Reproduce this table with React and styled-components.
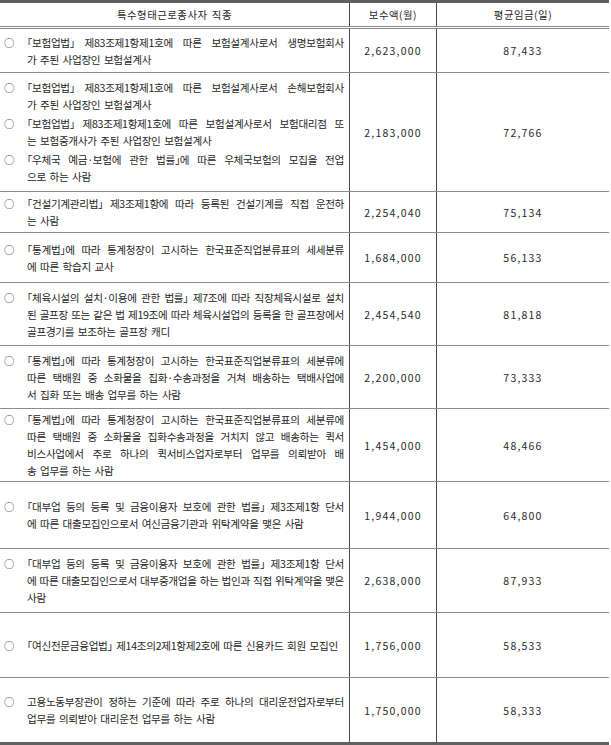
import React from 'react';
import styled, { createGlobalStyle } from 'styled-components';

const GlobalStyle = createGlobalStyle`
  html, body {
    margin: 0;
    padding: 0;
    background: #ffffff;
  }
  body {
    font-family: 'Noto Sans CJK KR', 'Noto Sans', sans-serif;
    color: #2a2a2a;
  }
`;

const Table = styled.div`
  width: 609px;
  border-top: 3px solid #5f5f5f;
  border-bottom: 3px solid #5f5f5f;
`;

const HeaderRow = styled.div`
  display: grid;
  grid-template-columns: 349px 87px 1fr;
  height: 26px;
  box-sizing: border-box;
  border-bottom: 3px double #8a8a8a;
`;

const HeaderCell = styled.div`
  display: flex;
  align-items: center;
  justify-content: center;
  font-size: 10.4px;
  letter-spacing: 0.5px;
  word-spacing: 1.5px;
  color: #2a2a2a;
  border-left: ${({ $first }) => ($first ? 'none' : '1px solid #4a4a4a')};
`;

const Row = styled.div`
  display: grid;
  grid-template-columns: 349px 87px 1fr;
  height: ${({ $h }) => $h}px;
  box-sizing: border-box;
  border-bottom: 1px solid #8c8c8c;

  &:last-child {
    border-bottom: none;
  }
`;

const DescCell = styled.div`
  display: flex;
  flex-direction: column;
  justify-content: center;
  gap: 2px;
  padding: 0 5px 0 4px;
  min-width: 0;
`;

const NumCell = styled.div`
  display: flex;
  align-items: center;
  justify-content: center;
  border-left: 1px solid #4a4a4a;
  font-size: 10.5px;
  letter-spacing: 1.2px;
  color: #2a2a2a;
`;

const Item = styled.div`
  display: flex;
  align-items: flex-start;
`;

const Bullet = styled.span`
  flex: none;
  width: 23px;
  font-size: 10.4px;
  line-height: 17px;
  color: #444;
`;

const Lines = styled.div`
  flex: 1;
  min-width: 0;
  font-size: 10.6px;
  line-height: 17px;
  letter-spacing: -0.3px;
  color: #262626;
  font-feature-settings: 'halt';
`;

const Line = styled.span`
  display: block;
  white-space: ${({ $justify }) => ($justify ? 'normal' : 'nowrap')};
  word-spacing: ${({ $justify }) => ($justify ? '0' : '1.5px')};
  text-align: ${({ $justify }) => ($justify ? 'justify' : 'left')};
  text-align-last: ${({ $justify }) => ($justify ? 'justify' : 'auto')};
`;

const Word = styled.span`
  display: inline-block;
  white-space: nowrap;
`;

const rows = [
  {
    h: 44,
    pay: '2,623,000',
    avg: '87,433',
    items: [
      ['「보험업법」 제83조제1항제1호에 따른 보험설계사로서 생명보험회사', '가 주된 사업장인 보험설계사'],
    ],
  },
  {
    h: 119,
    pay: '2,183,000',
    avg: '72,766',
    items: [
      ['「보험업법」 제83조제1항제1호에 따른 보험설계사로서 손해보험회사', '가 주된 사업장인 보험설계사'],
      ['「보험업법」 제83조제1항제1호에 따른 보험설계사로서 보험대리점 또', '는 보험중개사가 주된 사업장인 보험설계사'],
      ['「우체국 예금·보험에 관한 법률」에 따른 우체국보험의 모집을 전업', '으로 하는 사람'],
    ],
  },
  {
    h: 41,
    pay: '2,254,040',
    avg: '75,134',
    items: [['「건설기계관리법」 제3조제1항에 따라 등록된 건설기계를 직접 운전하', '는 사람']],
  },
  {
    h: 50,
    pay: '1,684,000',
    avg: '56,133',
    items: [['「통계법」에 따라 통계청장이 고시하는 한국표준직업분류표의 세세분류', '에 따른 학습지 교사']],
  },
  {
    h: 63,
    pay: '2,454,540',
    avg: '81,818',
    items: [
      [
        '「체육시설의 설치·이용에 관한 법률」 제7조에 따라 직장체육시설로 설치',
        '된 골프장 또는 같은 법 제19조에 따라 체육시설업의 등록을 한 골프장에서',
        '골프경기를 보조하는 골프장 캐디',
      ],
    ],
  },
  {
    h: 63,
    pay: '2,200,000',
    avg: '73,333',
    items: [
      [
        '「통계법」에 따라 통계청장이 고시하는 한국표준직업분류표의 세분류에',
        '따른 택배원 중 소화물을 집화·수송과정을 거쳐 배송하는 택배사업에',
        '서 집화 또는 배송 업무를 하는 사람',
      ],
    ],
  },
  {
    h: 73,
    pay: '1,454,000',
    avg: '48,466',
    items: [
      [
        '「통계법」에 따라 통계청장이 고시하는 한국표준직업분류표의 세분류에',
        '따른 택배원 중 소화물을 집화수송과정을 거치지 않고 배송하는 퀵서',
        '비스사업에서 주로 하나의 퀵서비스업자로부터 업무를 의뢰받아 배',
        '송 업무를 하는 사람',
      ],
    ],
  },
  {
    h: 67,
    pay: '1,944,000',
    avg: '64,800',
    items: [
      [
        '「대부업 등의 등록 및 금융이용자 보호에 관한 법률」 제3조제1항 단서',
        '에 따른 대출모집인으로서 여신금융기관과 위탁계약을 맺은 사람',
      ],
    ],
  },
  {
    h: 64,
    pay: '2,638,000',
    avg: '87,933',
    items: [
      [
        '「대부업 등의 등록 및 금융이용자 보호에 관한 법률」 제3조제1항 단서',
        '에 따른 대출모집인으로서 대부중개업을 하는 법인과 직접 위탁계약을 맺은',
        '사람',
      ],
    ],
  },
  {
    h: 65,
    pay: '1,756,000',
    avg: '58,533',
    items: [['「여신전문금융업법」 제14조의2제1항제2호에 따른 신용카드 회원 모집인']],
  },
  {
    h: 64,
    pay: '1,750,000',
    avg: '58,333',
    items: [
      [
        '고용노동부장관이 정하는 기준에 따라 주로 하나의 대리운전업자로부터',
        '업무를 의뢰받아 대리운전 업무를 하는 사람',
      ],
    ],
  },
];

// each word is kept whole so justification only widens the spaces between words
const JustifiedLine = ({ text, justify }) => {
  const words = text.split(' ');
  return (
    <Line $justify={justify}>
      {words.map((w, i) => (
        <React.Fragment key={i}>
          <Word>{w}</Word>
          {i < words.length - 1 ? ' ' : null}
        </React.Fragment>
      ))}
    </Line>
  );
};

const App = () => (
  <>
    <GlobalStyle />
    <Table>
      <HeaderRow>
        <HeaderCell $first>특수형태근로종사자 직종</HeaderCell>
        <HeaderCell>보수액(월)</HeaderCell>
        <HeaderCell>평균임금(일)</HeaderCell>
      </HeaderRow>
      {rows.map((row, i) => (
        <Row key={i} $h={row.h}>
          <DescCell>
            {row.items.map((lines, j) => (
              <Item key={j}>
                <Bullet>○</Bullet>
                <Lines>
                  {lines.map((text, k) => (
                    <JustifiedLine key={k} text={text} justify={k < lines.length - 1} />
                  ))}
                </Lines>
              </Item>
            ))}
          </DescCell>
          <NumCell>{row.pay}</NumCell>
          <NumCell>{row.avg}</NumCell>
        </Row>
      ))}
    </Table>
  </>
);

export default App;
